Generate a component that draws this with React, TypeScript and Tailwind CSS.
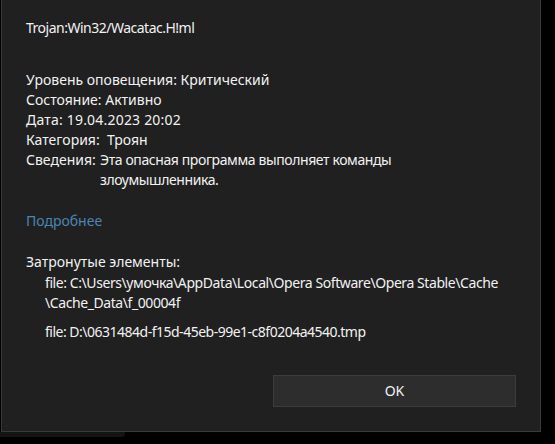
const files = [
    ["file: C:\\Users\\умочка\\AppData\\Local\\Opera Software\\Opera Stable\\Cache", "\\Cache_Data\\f_00004f"],
    ["file: D:\\0631484d-f15d-45eb-99e1-c8f0204a4540.tmp"],
];

export default function App() {
    return (
        <div className="w-[555px] h-[444px] bg-black overflow-hidden text-[14px] leading-5 text-[#f2f2f2] font-['Noto_Sans',sans-serif]">
            {/* Dialog */}
            <div className="ml-px w-[540px] h-[432px] bg-[#202020] border-x border-b border-[#3a3a3a] flex flex-col pl-6 pr-6 pt-[18px] pb-6">
                <div className="tracking-[-0.5px]">Trojan:Win32/Wacatac.H!ml</div>

                <div className="mt-8">
                    <div>Уровень оповещения: Критический</div>
                    <div>Состояние: Активно</div>
                    <div className="tracking-[0.2px]">Дата: 19.04.2023 20:02</div>
                    <div>Категория:&nbsp; Троян</div>
                    <div className="flex">
                        <span className="shrink-0 w-[74px]">Сведения:</span>
                        <span className="tracking-[-0.4px]">Эта опасная программа выполняет команды<br />злоумышленника.</span>
                    </div>
                </div>

                <div className="mt-[21px] text-[#4a86b3]">Подробнее</div>

                <div className="mt-[21px]">Затронутые элементы:</div>
                <div className="pl-[19px] mt-px flex flex-col gap-[9px] whitespace-nowrap">
                    {files.map((lines, i) => (
                        <div key={i} className={i === 0 ? "tracking-[-0.42px]" : "tracking-[-0.5px]"}>
                            {lines.map((l, j) => <div key={j}>{l}</div>)}
                        </div>
                    ))}
                </div>

                <div className="mt-auto flex justify-end">
                    <button className="w-[243px] h-[32px] bg-[#2d2d2d] border border-[#3c3c3c] text-[#f2f2f2]">
                        OK
                    </button>
                </div>
            </div>
            {/* shadow of the window behind */}
            <div className="w-[125px] h-[5px] bg-[#141414] rounded-br-[3px]" />
        </div>
    );
}
